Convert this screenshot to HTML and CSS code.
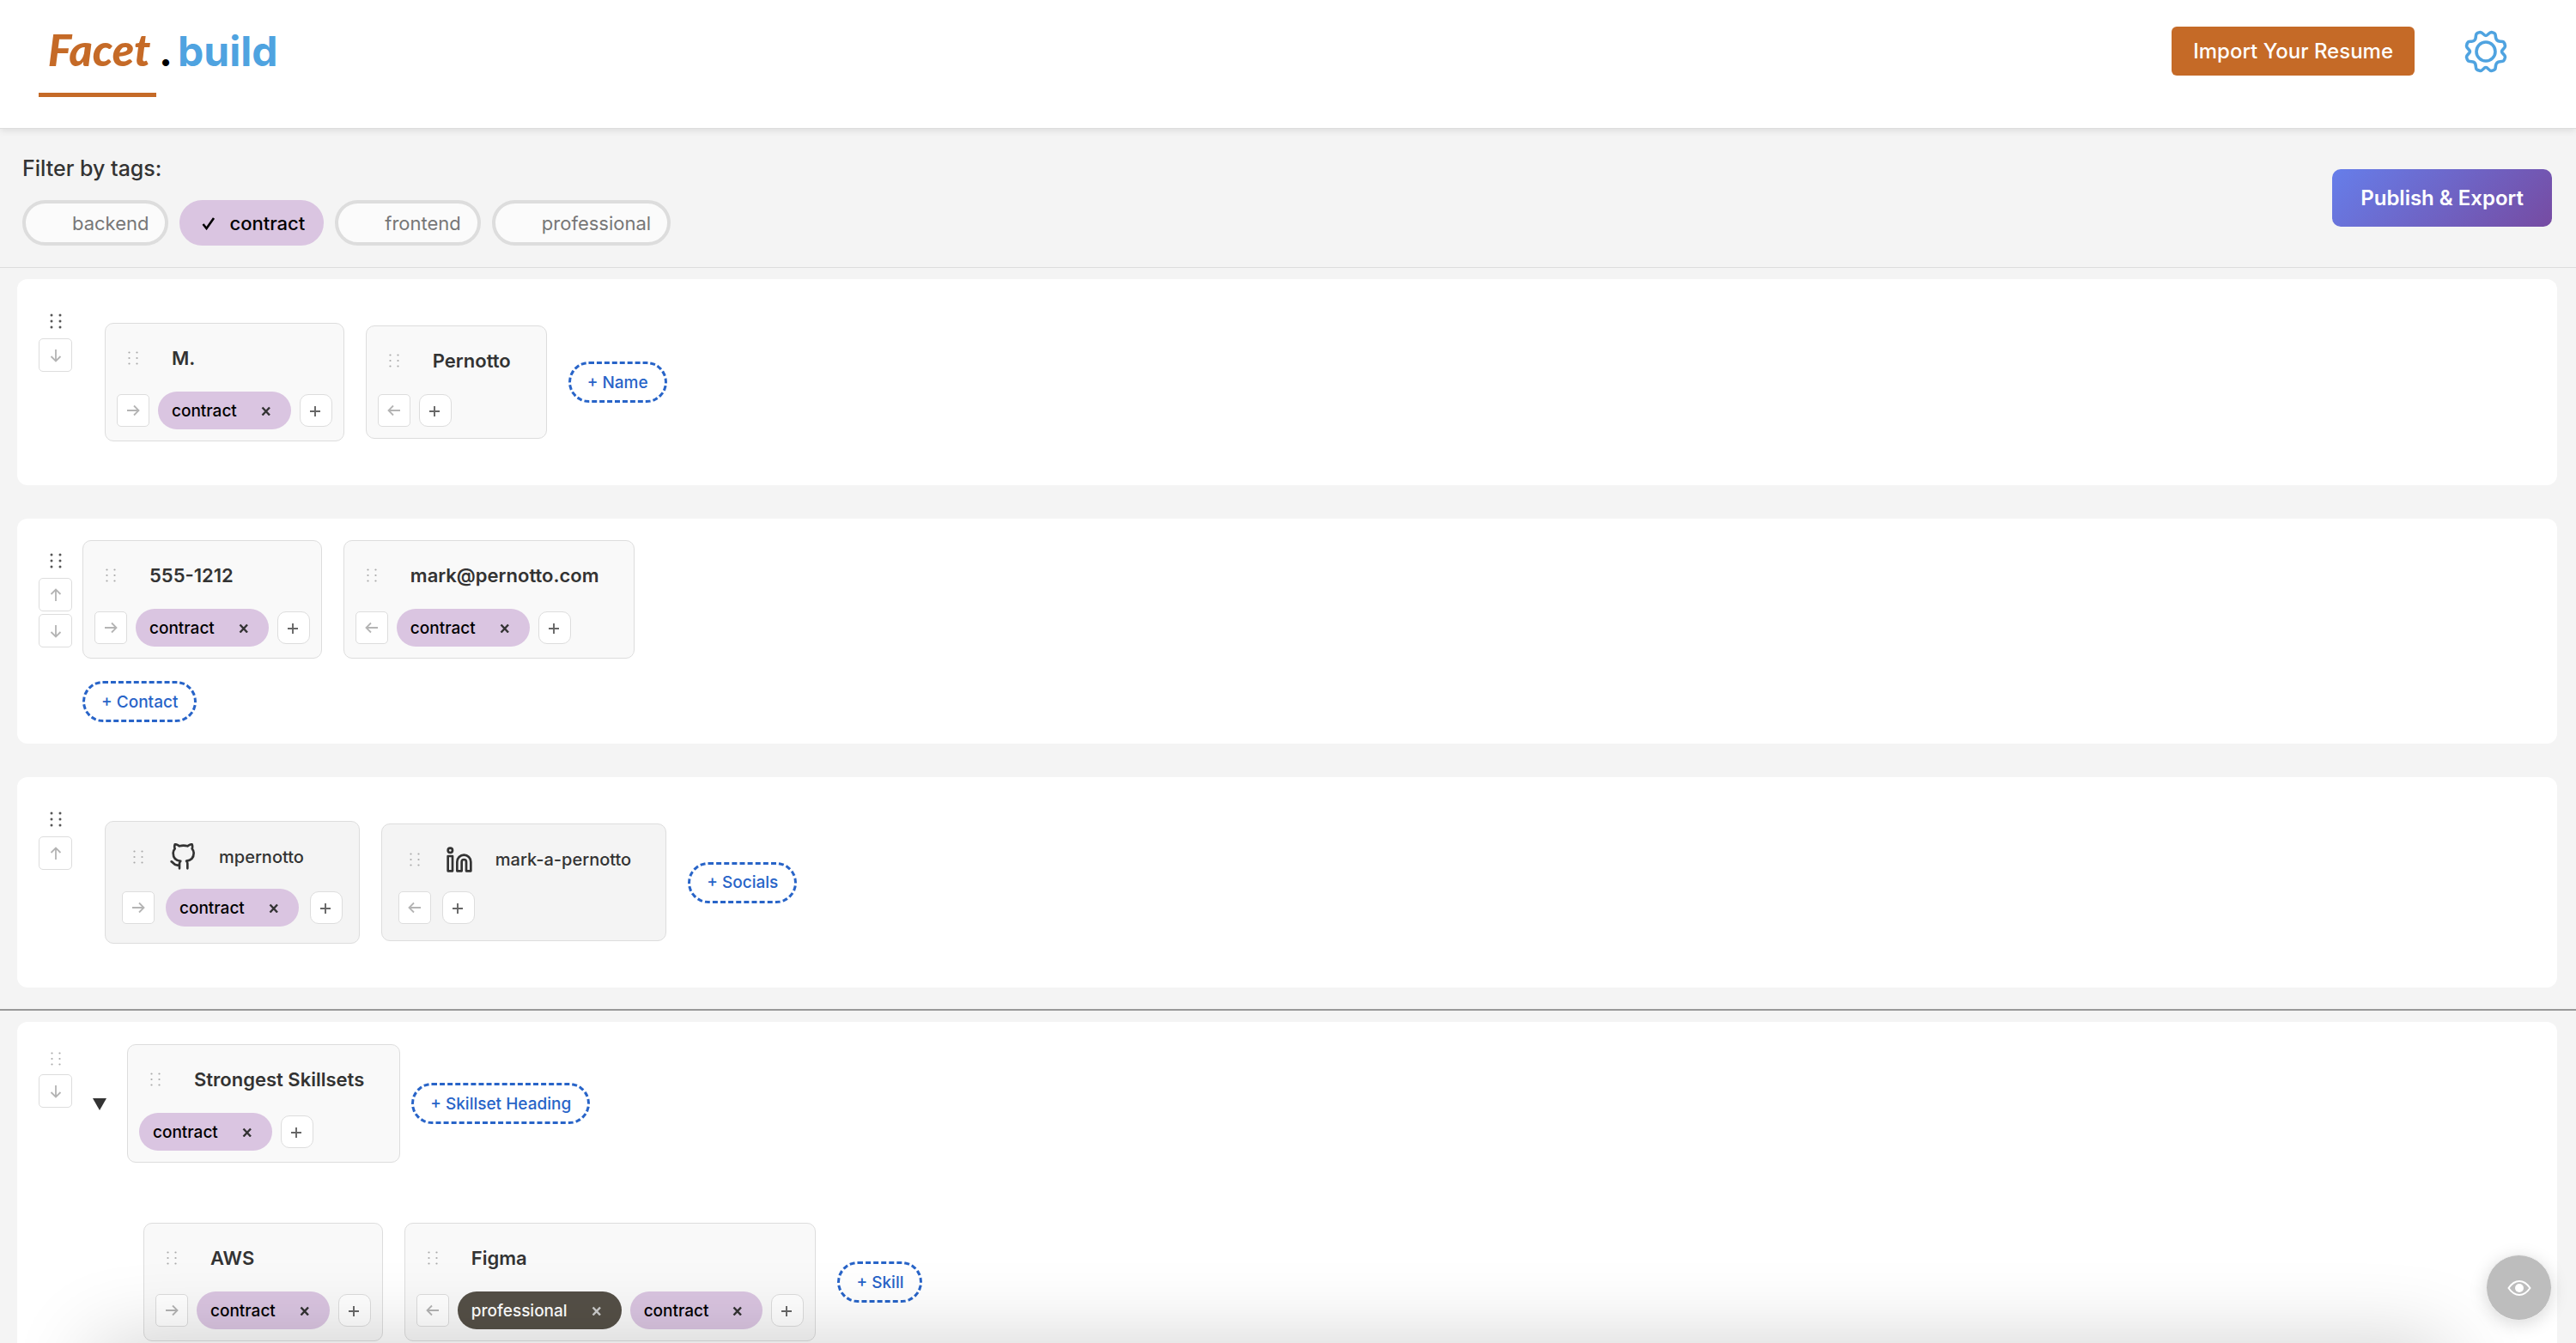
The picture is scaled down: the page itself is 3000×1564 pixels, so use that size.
FILE: index.html
```html
<!DOCTYPE html>
<html lang="en">
<head>
<meta charset="utf-8">
<meta name="viewport" content="width=device-width, initial-scale=1">
<title>Facet.build</title>
<link rel="stylesheet" href="styles.css">
</head>
<body>
<svg class="defs" width="0" height="0" aria-hidden="true">
  <symbol id="grip" viewBox="0 0 14 18"><g fill="currentColor"><circle cx="2" cy="2" r="1.5"/><circle cx="12" cy="2" r="1.5"/><circle cx="2" cy="9" r="1.5"/><circle cx="12" cy="9" r="1.5"/><circle cx="2" cy="16" r="1.5"/><circle cx="12" cy="16" r="1.5"/></g></symbol>
  <symbol id="grip-light" viewBox="0 0 14 18"><g fill="currentColor"><circle cx="2.500" cy="2.500" r="1.100"/><circle cx="11.500" cy="2.500" r="1.100"/><circle cx="2.500" cy="9" r="1.100"/><circle cx="11.500" cy="9" r="1.100"/><circle cx="2.500" cy="15.500" r="1.100"/><circle cx="11.500" cy="15.500" r="1.100"/></g></symbol>
  <symbol id="right" viewBox="0 0 16 16"><path d="M1 8h13M9 2.500l5.500 5.500L9 13.500" fill="none" stroke="currentColor" stroke-width="1.800"/></symbol>
  <symbol id="left" viewBox="0 0 16 16"><path d="M15 8H2M7 2.500L1.500 8 7 13.500" fill="none" stroke="currentColor" stroke-width="1.800"/></symbol>
  <symbol id="up" viewBox="0 0 16 16"><path d="M8 15V2M2.500 7L8 1.500 13.500 7" fill="none" stroke="currentColor" stroke-width="1.800"/></symbol>
  <symbol id="down" viewBox="0 0 16 16"><path d="M8 1v13M2.500 9L8 14.500 13.500 9" fill="none" stroke="currentColor" stroke-width="1.800"/></symbol>
  <symbol id="plus" viewBox="0 0 16 16"><path d="M7 3v12M1 9h12" fill="none" stroke="currentColor" stroke-width="1.900"/></symbol>
  <symbol id="cross" viewBox="0 0 12 12"><path d="M1.500 2.500l8.500 9M10 2.500l-8.500 9" fill="none" stroke="currentColor" stroke-width="2.400"/></symbol>
</svg>

<header class="topbar">
  <a class="logo" href="#"><span class="logo-name">Facet</span><span class="logo-dot">.</span><span class="logo-build">build</span></a>
  <div class="topbar-actions">
    <button class="import-btn" type="button">Import Your Resume</button>
    <button class="gear-btn" type="button" aria-label="Settings">
      <svg width="52" height="52" viewBox="0 0 52 52" fill="none" stroke="#4fa3e0" stroke-width="3.600" stroke-linejoin="round"><circle cx="26" cy="26" r="11"/><path d="M26 7.500C28.500 7.500 29.500 3.500 32.500 3.500C37.500 4.500 37 5.500 37.500 9.500C38 13 39.500 14 42.500 14.200C46.500 14 47.500 14.500 48.500 19.500C48.500 22.500 44.500 23.500 44.500 26C44.500 28.500 48.500 29.500 48.500 32.500C47.500 37.500 46.500 37.500 42.500 37.800C39.500 38 38 39 37.500 42.500C37 46.500 37.500 47.500 32.500 48.500C29.500 48.500 28.500 44.500 26 44.500C23.500 44.500 22.500 48.500 19.500 48.500C14.500 47.500 14.500 46.500 14.200 42.500C14 39 12.500 38 9.500 37.800C5.500 37.500 4.500 37.500 3.500 32.500C3.500 29.500 7.500 28.500 7.500 26C7.500 23.500 3.500 22.500 3.500 19.500C4.500 14.500 5.500 14 9.500 14.200C12.500 14 14 13 14.200 9.500C14.500 5.500 14.500 4.500 19.500 3.500C22.500 3.500 23.500 7.500 26 7.500Z"/></svg>
    </button>
  </div>
</header>

<section class="filters">
  <div class="filter-group">
    <h2 class="filter-title">Filter by tags:</h2>
    <div class="chips">
      <button class="chip" type="button"><span class="chip-mark"></span>backend</button>
      <button class="chip chip-on" type="button" aria-pressed="true"><span class="chip-mark"><svg width="16" height="16" viewBox="0 0 16 16"><path d="M1.500 9l4 5L14 2" fill="none" stroke="currentColor" stroke-width="2.600"/></svg></span>contract</button>
      <button class="chip" type="button"><span class="chip-mark"></span>frontend</button>
      <button class="chip" type="button"><span class="chip-mark"></span>professional</button>
    </div>
  </div>
  <button class="publish-btn" type="button">Publish &amp; Export</button>
</section>

<main class="board">
  <section class="panel">
    <div class="rail">
      <svg class="grip" width="14" height="18"><use href="#grip"/></svg>
      <button class="sq" type="button" aria-label="Move down"><svg width="16" height="16"><use href="#down"/></svg></button>
    </div>
    <div class="cards cards-inset">
      <article class="card">
        <div class="card-head"><svg class="grip-light" width="14" height="18"><use href="#grip-light"/></svg><h3>M.</h3></div>
        <div class="tags"><button class="sq" type="button" aria-label="Move right"><svg width="16" height="16"><use href="#right"/></svg></button><span class="tag">contract<button class="x" type="button" aria-label="Remove tag"><svg width="12" height="12"><use href="#cross"/></svg></button></span><button class="sq add" type="button" aria-label="Add tag"><svg width="16" height="16"><use href="#plus"/></svg></button></div>
      </article>
      <article class="card">
        <div class="card-head"><svg class="grip-light" width="14" height="18"><use href="#grip-light"/></svg><h3>Pernotto</h3></div>
        <div class="tags"><button class="sq" type="button" aria-label="Move left"><svg width="16" height="16"><use href="#left"/></svg></button><button class="sq add" type="button" aria-label="Add tag"><svg width="16" height="16"><use href="#plus"/></svg></button></div>
      </article>
      <button class="new-btn" type="button">+ Name</button>
    </div>
  </section>

  <section class="panel">
    <div class="rail">
      <svg class="grip" width="14" height="18"><use href="#grip"/></svg>
      <button class="sq" type="button" aria-label="Move up"><svg width="16" height="16"><use href="#up"/></svg></button>
      <button class="sq" type="button" aria-label="Move down"><svg width="16" height="16"><use href="#down"/></svg></button>
    </div>
    <div class="stack">
      <div class="cards">
        <article class="card">
          <div class="card-head"><svg class="grip-light" width="14" height="18"><use href="#grip-light"/></svg><h3>555-1212</h3></div>
          <div class="tags"><button class="sq" type="button" aria-label="Move right"><svg width="16" height="16"><use href="#right"/></svg></button><span class="tag">contract<button class="x" type="button" aria-label="Remove tag"><svg width="12" height="12"><use href="#cross"/></svg></button></span><button class="sq add" type="button" aria-label="Add tag"><svg width="16" height="16"><use href="#plus"/></svg></button></div>
        </article>
        <article class="card">
          <div class="card-head"><svg class="grip-light" width="14" height="18"><use href="#grip-light"/></svg><h3>mark@pernotto.com</h3></div>
          <div class="tags"><button class="sq" type="button" aria-label="Move left"><svg width="16" height="16"><use href="#left"/></svg></button><span class="tag">contract<button class="x" type="button" aria-label="Remove tag"><svg width="12" height="12"><use href="#cross"/></svg></button></span><button class="sq add" type="button" aria-label="Add tag"><svg width="16" height="16"><use href="#plus"/></svg></button></div>
        </article>
      </div>
      <button class="new-btn" type="button">+ Contact</button>
    </div>
  </section>

  <section class="panel">
    <div class="rail">
      <svg class="grip" width="14" height="18"><use href="#grip"/></svg>
      <button class="sq" type="button" aria-label="Move up"><svg width="16" height="16"><use href="#up"/></svg></button>
    </div>
    <div class="cards cards-inset">
      <article class="card social">
        <div class="card-head"><svg class="grip-light" width="14" height="18"><use href="#grip-light"/></svg><svg class="brand" width="32" height="32" viewBox="0 0 24 24"><path d="M9 19c-5 1.500-5-2.500-7-3m14 6v-3.870a3.370 3.370 0 0 0-.94-2.610c3.140-.35 6.440-1.540 6.440-7A5.440 5.440 0 0 0 20 4.770 5.070 5.070 0 0 0 19.910 1S18.730.65 16 2.480a13.380 13.380 0 0 0-7 0C6.270.65 5.090 1 5.090 1A5.070 5.070 0 0 0 5 4.770a5.440 5.440 0 0 0-1.500 3.780c0 5.420 3.300 6.610 6.440 7A3.370 3.370 0 0 0 9 18.130V22"/></svg><h3>mpernotto</h3></div>
        <div class="tags"><button class="sq" type="button" aria-label="Move right"><svg width="16" height="16"><use href="#right"/></svg></button><span class="tag">contract<button class="x" type="button" aria-label="Remove tag"><svg width="12" height="12"><use href="#cross"/></svg></button></span><button class="sq add" type="button" aria-label="Add tag"><svg width="16" height="16"><use href="#plus"/></svg></button></div>
      </article>
      <article class="card social">
        <div class="card-head"><svg class="grip-light" width="14" height="18"><use href="#grip-light"/></svg><svg class="brand" width="32" height="32" viewBox="0 0 24 24"><path d="M16 8a6 6 0 0 1 6 6v8h-4v-8a2 2 0 0 0-4 0v8h-4v-8a6 6 0 0 1 6-6z"/><path d="M2 9h4v13H2z"/><circle cx="4" cy="4" r="2"/></svg><h3>mark-a-pernotto</h3></div>
        <div class="tags"><button class="sq" type="button" aria-label="Move left"><svg width="16" height="16"><use href="#left"/></svg></button><button class="sq add" type="button" aria-label="Add tag"><svg width="16" height="16"><use href="#plus"/></svg></button></div>
      </article>
      <button class="new-btn" type="button">+ Socials</button>
    </div>
  </section>

  <hr class="divider">

  <section class="panel panel-skills">
    <div class="rail rail-skills">
      <svg class="grip-light" width="14" height="18"><use href="#grip-light"/></svg>
      <button class="sq" type="button" aria-label="Move down"><svg width="16" height="16"><use href="#down"/></svg></button>
    </div>
    <div class="skills">
      <div class="skill-heading">
        <button class="toggle" type="button" aria-label="Collapse"><svg width="16" height="16" viewBox="0 0 16 16"><path d="M0 2h16L8 16z" fill="#333"/></svg></button>
        <article class="card">
          <div class="card-head"><svg class="grip-light" width="14" height="18"><use href="#grip-light"/></svg><h3>Strongest Skillsets</h3></div>
          <div class="tags"><span class="tag">contract<button class="x" type="button" aria-label="Remove tag"><svg width="12" height="12"><use href="#cross"/></svg></button></span><button class="sq add" type="button" aria-label="Add tag"><svg width="16" height="16"><use href="#plus"/></svg></button></div>
        </article>
        <button class="new-btn" type="button">+ Skillset Heading</button>
      </div>
      <div class="cards cards-skills">
        <article class="card">
          <div class="card-head"><svg class="grip-light" width="14" height="18"><use href="#grip-light"/></svg><h3>AWS</h3></div>
          <div class="tags"><button class="sq" type="button" aria-label="Move right"><svg width="16" height="16"><use href="#right"/></svg></button><span class="tag">contract<button class="x" type="button" aria-label="Remove tag"><svg width="12" height="12"><use href="#cross"/></svg></button></span><button class="sq add" type="button" aria-label="Add tag"><svg width="16" height="16"><use href="#plus"/></svg></button></div>
        </article>
        <article class="card">
          <div class="card-head"><svg class="grip-light" width="14" height="18"><use href="#grip-light"/></svg><h3>Figma</h3></div>
          <div class="tags"><button class="sq" type="button" aria-label="Move left"><svg width="16" height="16"><use href="#left"/></svg></button><span class="tag tag-dark">professional<button class="x" type="button" aria-label="Remove tag"><svg width="12" height="12"><use href="#cross"/></svg></button></span><span class="tag">contract<button class="x" type="button" aria-label="Remove tag"><svg width="12" height="12"><use href="#cross"/></svg></button></span><button class="sq add" type="button" aria-label="Add tag"><svg width="16" height="16"><use href="#plus"/></svg></button></div>
        </article>
        <button class="new-btn" type="button">+ Skill</button>
      </div>
    </div>
  </section>
</main>

<div class="bottom-shade"></div>
<button class="preview-btn" type="button" aria-label="Preview"><svg width="28" height="20" viewBox="0 0 28 20"><path d="M1.500 10Q7 2 14 2t12.500 8Q21 18 14 18T1.500 10z" fill="none" stroke="#fff" stroke-width="2"/><circle cx="14" cy="10" r="5" fill="#fff"/></svg></button>
</body>
</html>
```
FILE: styles.css
```css
* { box-sizing: border-box; }

html, body { height: 100%; }

body {
  margin: 0;
  display: flex;
  flex-direction: column;
  overflow: hidden;
  background: #f4f4f4;
  color: #333;
  font-family: Inter, "Liberation Sans", sans-serif;
  font-size: 19px;
}

h2, h3 { margin: 0; }

button {
  margin: 0;
  padding: 0;
  border: 0;
  background: none;
  color: inherit;
  font: inherit;
  white-space: nowrap;
  cursor: pointer;
}

svg { display: block; flex: none; }
.defs { position: absolute; }

/* Header */
.topbar {
  flex: none;
  display: flex;
  justify-content: space-between;
  align-items: flex-start;
  height: 150px;
  padding: 23px 79px 0 45px;
  border-bottom: 1px solid #ddd;
  background: #fff;
  box-shadow: 0 2px 8px rgba(0, 0, 0, 0.1);
}

.logo {
  display: flex;
  align-items: baseline;
  font-size: 48px;
  font-weight: 700;
  line-height: 68px;
  color: #000;
  text-decoration: none;
}

.logo-name {
  width: 137px;
  height: 90px;
  padding-left: 4px;
  text-align: center;
  border-bottom: 5px solid #c56a27;
  color: #c56a27;
  font-family: Lato, sans-serif;
  font-size: 52px;
  font-weight: 900;
  font-style: italic;
}

.logo-dot { width: 25px; padding-left: 3px; }
.logo-build { color: #4fa3e0; }

.topbar-actions { display: flex; align-items: center; gap: 57px; padding-top: 8px; }

.import-btn {
  height: 57px;
  padding: 0 25px;
  border-radius: 6px;
  background: #c56a27;
  color: #fff;
  font-size: 24px;
  font-weight: 500;
}

/* Filters */
.filters {
  flex: none;
  display: flex;
  justify-content: space-between;
  align-items: center;
  padding: 25px 28px 25px 26px;
  border-bottom: 1px solid #ddd;
}

.filter-group { padding-top: 6px; }
.filter-title { font-size: 25px; line-height: 30px; font-weight: 500; }
.chips { display: flex; gap: 13px; margin-top: 22px; }

.chip {
  display: flex;
  align-items: center;
  height: 53px;
  padding: 0 19px 0 22px;
  border: 4px solid #ddd;
  border-radius: 27px;
  background: #fbfbfb;
  color: #777;
  font-size: 22px;
}

.chip-mark { width: 32px; }
.chip-on { padding: 0 18px 0 22px; border-color: #dac5e1; background: #dac5e1; color: #000; font-weight: 500; }

.publish-btn {
  height: 67px;
  padding: 0 33px;
  border-radius: 10px;
  background: linear-gradient(135deg, #667eea, #764ba2);
  color: #fff;
  font-size: 24px;
  font-weight: 600;
}

/* Board */
.board { flex: 1; min-height: 0; overflow: hidden; padding-top: 13px; }

.panel {
  display: flex;
  align-items: flex-start;
  margin: 0 22px 39px 20px;
  padding: 25px;
  border-radius: 12px;
  background: #fff;
}

.rail {
  flex: none;
  display: flex;
  flex-direction: column;
  align-items: center;
  gap: 3px;
  width: 39px;
  margin-right: 12px;
  padding-top: 15px;
}

.grip { margin-bottom: 8px; color: #555; }
.grip-light { color: #aaa; }
.cards { display: flex; align-items: center; gap: 25px; }
.cards-inset { padding: 26px; }
.stack { display: flex; flex-direction: column; align-items: flex-start; gap: 26px; }

.card {
  padding: 13px;
  border: 1px solid #ddd;
  border-radius: 10px;
  background: #f9f9f9;
}

.card-head {
  display: flex;
  align-items: center;
  height: 54px;
  margin-bottom: 12px;
  padding: 0 28px 0 12px;
}

.card-head h3 { margin-left: 38px; font-size: 22px; font-weight: 600; line-height: 28px; white-space: nowrap; }

.tags { display: flex; align-items: center; gap: 10px; }

.sq {
  flex: none;
  display: grid;
  place-items: center;
  width: 38px;
  height: 38px;
  border: 1px solid #ddd;
  border-radius: 5px;
  background: #fff;
  color: #b4b4b4;
}

.rail .sq { width: 39px; height: 39px; }
.add { border-radius: 10px; color: #666; }

.tag {
  display: flex;
  align-items: center;
  height: 44px;
  padding: 0 23px 0 16px;
  border-radius: 22px;
  background: #dac5e1;
  color: #000;
  font-weight: 500;
}

.x { margin-left: 28px; color: #333; }
.tag-dark { background: #555047; color: #fff; }
.tag-dark .x { color: #ccc; }

.new-btn {
  height: 48px;
  padding: 0 19px;
  border: 3px dashed #2864c8;
  border-radius: 24px;
  background: #fff;
  color: #2864c8;
  font-weight: 500;
}

/* Social cards */
.social { padding: 19px; background: #f4f4f4; }
.social .card-head { height: 44px; margin-bottom: 15px; padding-right: 21px; }
.social .tags { gap: 13px; }
.brand { margin-left: 29px; fill: none; stroke: #333; stroke-width: 2; stroke-linecap: round; stroke-linejoin: round; }
.social .card-head h3 { margin-left: 26px; font-size: 20px; font-weight: 500; }

/* Skills */
.divider { height: 2px; margin: -14px 0 13px; border: 0; background: #999; }
.panel-skills { padding-top: 26px; }
.rail-skills { gap: 9px; padding-top: 8px; }
.skills { display: flex; flex-direction: column; gap: 70px; }
.skill-heading { display: flex; align-items: center; gap: 13px; }
.toggle { margin: 0 11px 0 12px; }
.cards-skills { padding: 0 71px; }

/* Floating layer */
.bottom-shade {
  position: fixed;
  top: 100%;
  left: 110px;
  right: 150px;
  height: 100px;
  box-shadow: 0 0 96px rgba(0, 0, 0, 0.19);
  pointer-events: none;
}

.preview-btn {
  position: fixed;
  right: 28px;
  bottom: 26px;
  display: grid;
  place-items: center;
  width: 77px;
  height: 77px;
  border: 1px solid #eee;
  border-radius: 50%;
  background: #bdbdbd;
  box-shadow: 0 4px 20px rgba(0, 0, 0, 0.15);
}
```
